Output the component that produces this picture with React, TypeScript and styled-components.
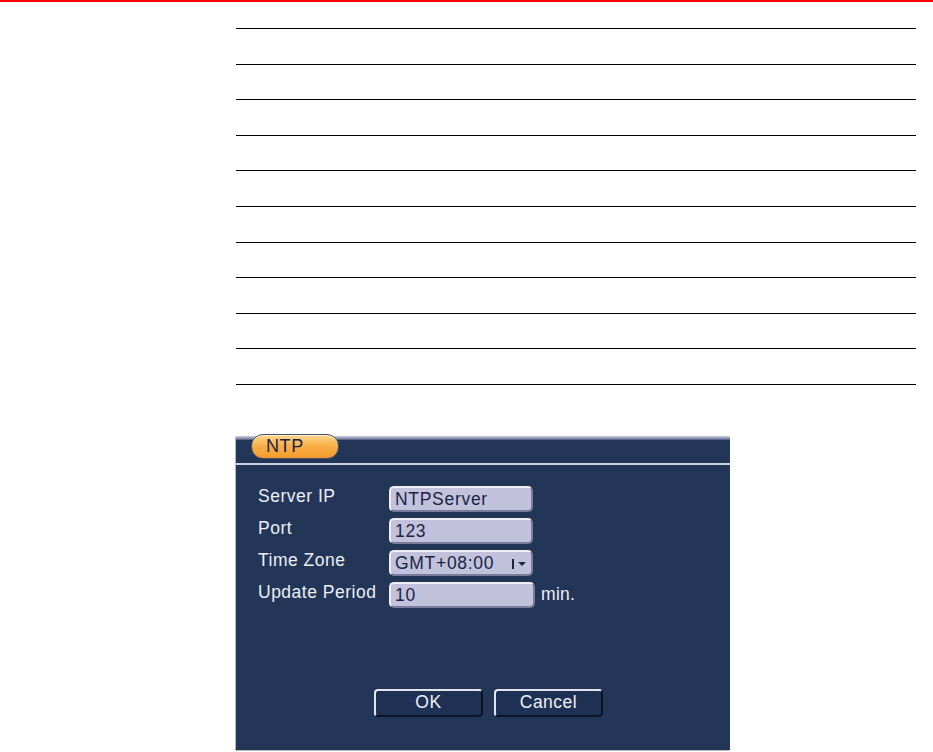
import React from "react";
import styled, { createGlobalStyle } from "styled-components";

const GlobalStyle = createGlobalStyle`
  html, body {
    margin: 0;
    padding: 0;
    background: #ffffff;
    font-family: "Liberation Sans", Arial, sans-serif;
  }
`;

const Page = styled.div`
  width: 933px;
  height: 752px;
  overflow: hidden;
  display: flex;
  flex-direction: column;
`;

const TopBar = styled.div`
  height: 2px;
  background: #ff0000;
`;

const RuleList = styled.div`
  display: flex;
  flex-direction: column;
  gap: 34.6px;
  margin: 26px 0 0 236px;
  width: 680px;
`;

const Rule = styled.div`
  height: 1px;
  background: #000000;
`;

const Panel = styled.div`
  margin: 51px 0 0 236px;
  width: 494px;
  height: 314px;
  background: #233658;
  display: flex;
  flex-direction: column;
  box-shadow: -1px 1px 0 #b4b8c8;
`;

const TopStrip = styled.div`
  height: 4px;
  background: linear-gradient(#d0d2e2, #8a90b0 60%, #4a5478);
`;

const TitleBar = styled.div`
  height: 23px;
  position: relative;
`;

const Tab = styled.div`
  position: absolute;
  left: 15px;
  top: -6px;
  width: 88px;
  height: 25px;
  box-sizing: border-box;
  border: 1px solid #4a4e6a;
  border-radius: 12px;
  background: linear-gradient(#ffd890, #f9b04a 45%, #f39a2c);
  box-shadow: inset 0 1px 0 #fff0c8;
  color: #1a2444;
  font-size: 18px;
  line-height: 23px;
  padding-left: 14px;
  letter-spacing: 0.6px;
`;

const Separator = styled.div`
  height: 2px;
  background: #c9d0e2;
`;

const Body = styled.div`
  flex: 1;
  display: flex;
  flex-direction: column;
  padding: 21px 0 33px 22px;
`;

const Form = styled.div`
  display: flex;
  flex-direction: column;
  gap: 6px;
`;

const Row = styled.div`
  display: flex;
  align-items: center;
  height: 26px;
`;

const Label = styled.div`
  width: 131px;
  color: #eceef6;
  font-size: 17.5px;
  letter-spacing: 0.5px;
  margin-top: -4px;
`;

const Field = styled.div<{ $w?: number }>`
  width: ${(p) => p.$w ?? 144}px;
  height: 26px;
  box-sizing: border-box;
  background: #c2c2dc;
  border-radius: 5px;
  border-top: 2px solid #eeeef6;
  border-left: 2px solid #eeeef6;
  border-right: 2px solid #7a7c9a;
  border-bottom: 2px solid #7a7c9a;
  color: #1a2444;
  font-size: 17.5px;
  letter-spacing: 0.7px;
  line-height: 22px;
  padding-left: 4px;
  display: flex;
  align-items: center;
`;

const Caret = styled.svg`
  margin-left: auto;
  margin-right: 4px;
`;

const Unit = styled.span`
  color: #eceef6;
  font-size: 17.5px;
  margin-left: 6px;
  letter-spacing: 0.3px;
`;

const Buttons = styled.div`
  margin-top: auto;
  display: flex;
  gap: 11px;
  padding-left: 116px;
`;

const Button = styled.div`
  width: 109px;
  height: 28px;
  box-sizing: border-box;
  border-radius: 4px;
  border-top: 2px solid #e4e4ec;
  border-left: 2px solid #e4e4ec;
  border-right: 2px solid #0c1428;
  border-bottom: 2px solid #0c1428;
  background: #1e3053;
  color: #eef0f8;
  font-size: 17.5px;
  display: flex;
  align-items: center;
  justify-content: center;
  letter-spacing: 0.5px;
`;

const rows = [
  { label: "Server IP", value: "NTPServer" },
  { label: "Port", value: "123" },
];

export default function App() {
  return (
    <Page>
      <GlobalStyle />
      <TopBar />
      <RuleList>
        {Array.from({ length: 11 }).map((_, i) => (
          <Rule key={i} />
        ))}
      </RuleList>
      <Panel>
        <TopStrip />
        <TitleBar>
          <Tab>NTP</Tab>
        </TitleBar>
        <Separator />
        <Body>
          <Form>
            {rows.map((r) => (
              <Row key={r.label}>
                <Label>{r.label}</Label>
                <Field>{r.value}</Field>
              </Row>
            ))}
            <Row>
              <Label>Time Zone</Label>
              <Field>
                GMT+08:00
                <Caret width="16" height="14" viewBox="0 0 16 14">
                  <rect x="1" y="3" width="2" height="10" fill="#1a2444" />
                  <path d="M7 6 L15 6 L11 10 Z" fill="#1a2444" />
                </Caret>
              </Field>
            </Row>
            <Row>
              <Label>Update Period</Label>
              <Field $w={146}>10</Field>
              <Unit>min.</Unit>
            </Row>
          </Form>
          <Buttons>
            <Button>OK</Button>
            <Button>Cancel</Button>
          </Buttons>
        </Body>
      </Panel>
    </Page>
  );
}
